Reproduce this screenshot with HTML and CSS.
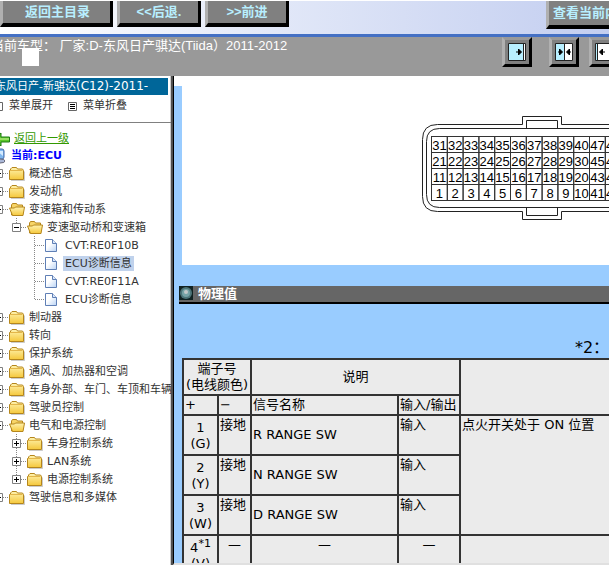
FILE: index.html
```html
<!DOCTYPE html>
<html lang="zh-CN">
<head>
    <meta charset="UTF-8">
    <meta name="viewport" content="width=device-width, initial-scale=1.0">
    <title>东风日产骐达 ECU诊断信息</title>
    <link rel="stylesheet" href="styles.css">
</head>
<body>
    <!-- Shared icons -->
    <svg class="defs" width="0" height="0">
        <defs>
            <linearGradient id="gold" x1="0" y1="0" x2="0" y2="1">
                <stop offset="0" stop-color="#fff3b0"/>
                <stop offset="1" stop-color="#f5c83c"/>
            </linearGradient>
            <linearGradient id="paper" x1="0" y1="0" x2="1" y2="1">
                <stop offset="0.4" stop-color="#fff"/>
                <stop offset="1" stop-color="#b9d3f5"/>
            </linearGradient>
        </defs>
        <symbol id="folder" viewBox="0 0 16 18">
            <path d="M0.500 15.500h14v-9l-1-1.500h-5l-1-1.500h-4.500l-1.500 1.500v1.500h-1z" fill="url(#gold)" stroke="#b5861c"/>
            <path d="M1 6.500h12.500" stroke="#e3b64a"/>
            <path d="M2 16.500h13.500v-9" fill="none" stroke="#999" opacity="0.5"/>
        </symbol>
        <symbol id="folder-open" viewBox="0 0 16 18">
            <path d="M2.500 15v-10l1-1.500h4l1 1.500h5v10z" fill="#f7d568" stroke="#b5861c"/>
            <path d="M3.500 15.500l-3-7.500h5l1-1h9l-1.500 8.500z" fill="url(#gold)" stroke="#b5861c"/>
        </symbol>
        <symbol id="page" viewBox="0 0 16 18">
            <path d="M0.500 3.500h7l4 4v8h-11z" fill="url(#paper)" stroke="#5f7fb5"/>
            <path d="M7.500 3.500v4h4" fill="#dbe8fb" stroke="#5f7fb5"/>
        </symbol>
        <symbol id="plus" viewBox="0 0 18 18">
            <path d="M7.500 0v18M12 9.500h6" stroke="#888" stroke-dasharray="1 1"/>
            <path d="M3.500 5.500h8v8h-8z" fill="#fff" stroke="#808080"/>
            <path d="M5 9.500h5M7.500 7v5" stroke="#000"/>
        </symbol>
        <symbol id="minus" viewBox="0 0 18 18">
            <path d="M7.500 0v5M12 9.500h6" stroke="#888" stroke-dasharray="1 1"/>
            <path d="M3.500 5.500h8v8h-8z" fill="#fff" stroke="#808080"/>
            <path d="M5 9.500h5" stroke="#000"/>
        </symbol>
        <symbol id="plus-last" viewBox="0 0 18 18">
            <path d="M7.500 0v5M12 9.500h6" stroke="#888" stroke-dasharray="1 1"/>
            <path d="M3.500 5.500h8v8h-8z" fill="#fff" stroke="#808080"/>
            <path d="M5 9.500h5M7.500 7v5" stroke="#000"/>
        </symbol>
        <symbol id="join" viewBox="0 0 18 18">
            <path d="M7.500 0v18M8 9.500h10" stroke="#888" stroke-dasharray="1 1"/>
        </symbol>
        <symbol id="join-last" viewBox="0 0 18 18">
            <path d="M7.500 0v10M8 9.500h10" stroke="#888" stroke-dasharray="1 1"/>
        </symbol>
    </svg>

    <header class="toolbar">
        <button class="nav-btn nav-home">返回主目录</button>
        <button class="nav-btn">&lt;&lt;后退.</button>
        <button class="nav-btn">&gt;&gt;前进</button>
        <button class="nav-btn nav-view">查看当前内容</button>
    </header>

    <div class="infobar">
        <div class="car">当前车型： 厂家:D-东风日产骐达(Tiida）2011-2012</div>
        <div class="pane-btns">
            <button class="pane-btn" aria-label="向右展开">
                <svg width="18" height="18"><path d="M.5.500h17v17h-17z" fill="#fff" stroke="#222"/><path d="M1 1h14v16h-14z" fill="#b8efff"/><path d="M15.500 1v16" stroke="#222"/><path d="M8 9h3M10.500 6l3 3-3 3z" fill="#000" stroke="#000"/></svg>
            </button>
            <button class="pane-btn" aria-label="居中">
                <svg width="18" height="18"><path d="M.5.500h17v17h-17z" fill="#fff" stroke="#222"/><path d="M1 1h8v16h-8z" fill="#b8efff"/><path d="M9.500 1v16" stroke="#222"/><path d="M3 9h3M4.500 6l3 3-3 3zM16 9h-2M14.500 6l-3 3 3 3z" fill="#000" stroke="#000"/></svg>
            </button>
            <button class="pane-btn pane-left" aria-label="向左展开">
                <svg width="18" height="18"><path d="M.5.500h17v17h-17z" fill="#fff" stroke="#222"/><path d="M1 1h1v16h-1z" fill="#b8efff"/><path d="M2.500 1v16" stroke="#222"/><path d="M10 9h-3M7.500 6l-3 3 3 3z" fill="#000" stroke="#000"/></svg>
            </button>
        </div>
        <div class="blank"></div>
    </div>

    <div class="frames">
        <nav class="sidebar">
            <h2 class="side-title">东风日产-新骐达<span class="code">(C12)-2011-</span></h2>
            <div class="side-tools">
                <svg width="9" height="9"><path d="M.5.500h8v8h-8z" fill="#fff" stroke="#666"/></svg>
                <a href="#">菜单展开</a>
                <svg width="9" height="9"><path d="M.5.500h8v8h-8z" fill="#fff" stroke="#666"/><path d="M2 2.500h5M2 4.500h5M2 6.500h5" stroke="#000"/></svg>
                <a href="#">菜单折叠</a>
            </div>
            <div class="tree-wrap">
                <div class="row">
                    <svg class="head-icon" width="19" height="16"><path d="M3 8l7-6v4h8.500v5h-8.500v4z" fill="#5cc72a" stroke="#1b7a10"/><path d="M8 8h10" stroke="#d6f7a0"/></svg>
                    <a class="back" href="#">返回上一级</a>
                </div>
                <div class="row current-row">
                    <svg class="head-icon" width="14" height="16"><rect x="1" y="1" width="12" height="10" rx="2" fill="#7fb7ee" stroke="#4569a8"/><path d="M6 3h6v5z" fill="#d4ebff"/><ellipse cx="9" cy="13" rx="5" ry="2" fill="#aab8d8" stroke="#667"/></svg>
                    <span class="current">当前:ECU</span>
                </div>
                <ul class="tree">
                    <li><div class="row"><svg class="tog"><use href="#plus"/></svg><svg class="ico"><use href="#folder"/></svg><a href="#">概述信息</a></div></li>
                    <li><div class="row"><svg class="tog"><use href="#plus"/></svg><svg class="ico"><use href="#folder"/></svg><a href="#">发动机</a></div></li>
                    <li><div class="row"><svg class="tog"><use href="#minus"/></svg><svg class="ico"><use href="#folder-open"/></svg><a href="#">变速箱和传动系</a></div>
                        <ul>
                            <li><div class="row"><svg class="tog"><use href="#minus"/></svg><svg class="ico"><use href="#folder-open"/></svg><a href="#">变速驱动桥和变速箱</a></div>
                                <ul>
                                    <li><div class="row"><svg class="tog"><use href="#join"/></svg><svg class="ico"><use href="#page"/></svg><a href="#">CVT:RE0F10B</a></div></li>
                                    <li><div class="row"><svg class="tog"><use href="#join"/></svg><svg class="ico"><use href="#page"/></svg><a class="selected" href="#">ECU诊断信息</a></div></li>
                                    <li><div class="row"><svg class="tog"><use href="#join"/></svg><svg class="ico"><use href="#page"/></svg><a href="#">CVT:RE0F11A</a></div></li>
                                    <li><div class="row"><svg class="tog"><use href="#join-last"/></svg><svg class="ico"><use href="#page"/></svg><a href="#">ECU诊断信息</a></div></li>
                                </ul>
                            </li>
                        </ul>
                    </li>
                    <li><div class="row"><svg class="tog"><use href="#plus"/></svg><svg class="ico"><use href="#folder"/></svg><a href="#">制动器</a></div></li>
                    <li><div class="row"><svg class="tog"><use href="#plus"/></svg><svg class="ico"><use href="#folder"/></svg><a href="#">转向</a></div></li>
                    <li><div class="row"><svg class="tog"><use href="#plus"/></svg><svg class="ico"><use href="#folder"/></svg><a href="#">保护系统</a></div></li>
                    <li><div class="row"><svg class="tog"><use href="#plus"/></svg><svg class="ico"><use href="#folder"/></svg><a href="#">通风、加热器和空调</a></div></li>
                    <li><div class="row"><svg class="tog"><use href="#plus"/></svg><svg class="ico"><use href="#folder"/></svg><a href="#">车身外部、车门、车顶和车辆</a></div></li>
                    <li><div class="row"><svg class="tog"><use href="#plus"/></svg><svg class="ico"><use href="#folder"/></svg><a href="#">驾驶员控制</a></div></li>
                    <li><div class="row"><svg class="tog"><use href="#minus"/></svg><svg class="ico"><use href="#folder-open"/></svg><a href="#">电气和电源控制</a></div>
                        <ul>
                            <li><div class="row"><svg class="tog"><use href="#plus"/></svg><svg class="ico"><use href="#folder"/></svg><a href="#">车身控制系统</a></div></li>
                            <li><div class="row"><svg class="tog"><use href="#plus"/></svg><svg class="ico"><use href="#folder"/></svg><a href="#">LAN系统</a></div></li>
                            <li><div class="row"><svg class="tog"><use href="#plus-last"/></svg><svg class="ico"><use href="#folder"/></svg><a href="#">电源控制系统</a></div></li>
                        </ul>
                    </li>
                    <li><div class="row"><svg class="tog"><use href="#plus-last"/></svg><svg class="ico"><use href="#folder"/></svg><a href="#">驾驶信息和多媒体</a></div></li>
                </ul>
            </div>
        </nav>

        <main class="content">
            <div class="sheet">
                <div class="figure">
                    <!-- ECU connector, pins are filled in by the script below -->
                    <svg id="connector" width="560" height="179">
                        <g fill="none" stroke="#222" stroke-width="1">
                            <path d="M340.500 38.500v-8h39v8H500M340.500 38.500H255.500Q240.500 38.500 240.500 53.500V110.500Q240.500 125.500 255.500 125.500H340.500v8h39v-8H500"/>
                            <path d="M500 42.500H257.500Q244.500 42.500 244.500 55.500V108.500Q244.500 121.500 257.500 121.500H500"/>
                            <path d="M344.500 42.500v-8h31v8M344.500 121.500v8h31v-8"/>
                        </g>
                    </svg>
                </div>
                <h3 class="section">
                    <svg width="14" height="14"><rect width="14" height="14" fill="#122"/><circle cx="7" cy="7" r="6" fill="#4c7478"/><circle cx="7" cy="7" r="4" fill="#76a3a6"/><circle cx="7" cy="6" r="2" fill="#c3c9c9"/></svg>
                    物理值
                </h3>
                <p class="note">*2：</p>
                <table class="values">
                    <colgroup><col class="c-pin"><col class="c-neg"><col class="c-name"><col class="c-io"><col></colgroup>
                    <tr class="r-head"><th colspan="2">端子号<br>(电线颜色)</th><th colspan="2">说明</th><th rowspan="2"></th></tr>
                    <tr class="r-sub"><td>+</td><td>−</td><td>信号名称</td><td>输入/输出</td></tr>
                    <tr class="r-pin"><td class="pin">1<br>(G)</td><td>接地</td><td class="name">R RANGE SW</td><td>输入</td><td rowspan="3">点火开关处于 ON 位置</td></tr>
                    <tr class="r-pin"><td class="pin">2<br>(Y)</td><td>接地</td><td class="name">N RANGE SW</td><td>输入</td></tr>
                    <tr class="r-pin"><td class="pin">3<br>(W)</td><td>接地</td><td class="name">D RANGE SW</td><td>输入</td></tr>
                    <tr class="r-pin"><td class="pin">4<sup>*1</sup><br>(V)</td><td class="none">—</td><td class="none">—</td><td class="none">—</td><td></td></tr>
                </table>
            </div>
        </main>
    </div>

    <script>
        const pins = [
            [31, 32, 33, 34, 35, 36, 37, 38, 39, 40, 47, 48],
            [21, 22, 23, 24, 25, 26, 27, 28, 29, 30, 45, 46],
            [11, 12, 13, 14, 15, 16, 17, 18, 19, 20, 43, 44],
            [1, 2, 3, 4, 5, 6, 7, 8, 9, 10, 41, 42]
        ];
        const cell = 15.8;
        let out = '';
        pins.forEach((line, r) => {
            line.forEach((pin, c) => {
                const x = 249.5 + c * cell;
                const y = 50.5 + r * 16;
                out += `<rect x="${x}" y="${y}" width="${cell}" height="16" fill="none" stroke="#333"/>`;
                out += `<text class="pin-no" x="${x + cell / 2}" y="${y + 13}" text-anchor="middle">${pin}</text>`;
            });
        });
        document.getElementById('connector').insertAdjacentHTML('beforeend', out);
    </script>
</body>
</html>
```
FILE: styles.css
```css
* {
    box-sizing: border-box;
}
body {
    margin: 0;
    height: 100vh;
    display: flex;
    flex-direction: column;
    overflow: hidden;
    background: #fff;
    font-family: "DejaVu Sans", "Noto Sans CJK SC", sans-serif;
    font-size: 13px;
}
.defs {
    position: absolute;
}
a {
    color: #333;
    text-decoration: none;
}

/* top toolbar */
.toolbar {
    flex: none;
    display: flex;
    align-items: flex-start;
    gap: 4px;
    height: 37px;
    overflow: hidden;
    border-top: 1px solid #fff;
    border-bottom: 3px solid #4470c4;
    background: linear-gradient(to right, #fff, #e2e8f8 45%, #c3cef0);
}
.nav-btn {
    flex: none;
    width: 84px;
    height: 26px;
    padding: 0;
    border: 3px solid #000;
    border-top: 0;
    border-left-color: #b0b0b0;
    border-bottom-width: 4px;
    background: #808080;
    color: #b8efff;
    font: bold 13px/20px "Liberation Sans", "Noto Sans CJK SC", sans-serif;
    white-space: nowrap;
}
.nav-home {
    width: 113px;
    padding-left: 22px;
    text-align: left;
}
.nav-view {
    width: 110px;
    height: 28px;
    margin: 0 -47px 0 auto;
    padding-left: 4px;
    text-align: left;
}

/* grey bar with the car model */
.infobar {
    flex: none;
    position: relative;
    display: flex;
    justify-content: space-between;
    height: 39px;
    overflow: hidden;
    background: #999;
    color: #fff;
    font: 13px/18px "Liberation Sans", "Noto Sans CJK SC", sans-serif;
    white-space: nowrap;
}
.car {
    margin-left: -9px;
}
.pane-btns {
    display: flex;
    gap: 17px;
    margin-right: -10px;
}
.pane-btn {
    width: 30px;
    height: 30px;
    padding: 3px;
    border: 3px solid #000;
    border-top-color: #999;
    border-left-color: #b0b0b0;
    background: #808080;
}
.pane-left {
    margin-left: -7px;
}
.pane-btn svg {
    display: block;
}
.blank {
    position: absolute;
    left: 22px;
    top: 11px;
    width: 17px;
    height: 18px;
    background: #fff;
}

.frames {
    flex: 1;
    display: flex;
    min-height: 0;
}

/* left menu */
.sidebar {
    flex: none;
    width: 174px;
    padding-top: 2px;
    overflow: hidden;
    border-right: 3px solid #505050;
    box-shadow: inset -1px 0 #ccc;
    font-size: 11px;
    line-height: 18px;
    white-space: nowrap;
}
.side-title {
    height: 17px;
    margin: 0 3px 0 0;
    overflow: hidden;
    background: #069;
    color: #fff;
    font-size: 11px;
    font-weight: normal;
    line-height: 17px;
    text-indent: -5px;
}
.code {
    font-size: 12px;
}
.side-tools {
    display: flex;
    align-items: center;
    gap: 6px;
    height: 28px;
    margin-left: -6px;
    padding-bottom: 5px;
    border-bottom: 1px solid #808080;
}
.side-tools a {
    margin-right: 9px;
}
.tree-wrap {
    margin-left: -9px;
    padding-top: 7px;
}
.row {
    display: flex;
    align-items: center;
    height: 18px;
}
.current-row {
    height: 16px;
}
.head-icon {
    flex: none;
    margin-right: 4px;
}
.back {
    color: #390;
    text-decoration: underline;
}
.current {
    color: #00f;
    font-weight: bold;
    padding-left: 2px;
}
.tree,
.tree ul {
    margin: 0;
    padding: 0;
    list-style: none;
}
.tree ul {
    padding-left: 18px;
}
.tog {
    flex: none;
    width: 18px;
    height: 18px;
}
.ico {
    flex: none;
    width: 16px;
    height: 18px;
    margin-right: 2px;
}
.row .ico + a {
    padding: 0 2px;
    line-height: 15px;
}
.selected {
    background: #c0d2ec;
}

/* right page */
.content {
    flex: 1;
    min-width: 0;
    overflow: hidden;
    padding-top: 10px;
    border-left: 1px solid #000;
    border-bottom: 2px solid #e0e0e0;
    margin-left: -1px;
}
.sheet {
    min-height: 100%;
    padding-left: 8px;
    background: #9cf;
}
.figure {
    height: 179px;
    overflow: hidden;
    background: #fff;
}
.figure svg {
    display: block;
}
.pin-no {
    font: 13px "Liberation Sans", sans-serif;
}
.section {
    display: flex;
    gap: 5px;
    height: 18px;
    margin: 21px 0 0 -3px;
    border-bottom: 2px solid #000;
    background: #666;
    color: #fff;
    font: bold 13px/16px "Liberation Sans", "Noto Sans CJK SC", sans-serif;
}
.note {
    width: 820px;
    margin: 34px 0 0;
    font-size: 16px;
    line-height: 20px;
    text-align: center;
}
.values {
    width: 820px;
    table-layout: fixed;
    border-collapse: collapse;
    background: #ebebeb;
    border: 2px solid #333;
    line-height: 16px;
}
.c-pin {
    width: 35px;
}
.c-neg {
    width: 33px;
}
.c-name {
    width: 147px;
}
.c-io {
    width: 62px;
}
.values th,
.values td {
    padding: 1px;
    border: 2px solid #333;
    font-weight: normal;
    vertical-align: top;
    white-space: nowrap;
}
.values th {
    vertical-align: middle;
}
.r-head {
    height: 36px;
}
.r-sub {
    height: 20px;
}
.r-pin {
    height: 40px;
}
.values .pin {
    padding-top: 4px;
    text-align: center;
}
.values .name {
    vertical-align: middle;
}
.values .none {
    text-align: center;
}
.values sup {
    font-size: 11px;
    line-height: 1px;
}
```
